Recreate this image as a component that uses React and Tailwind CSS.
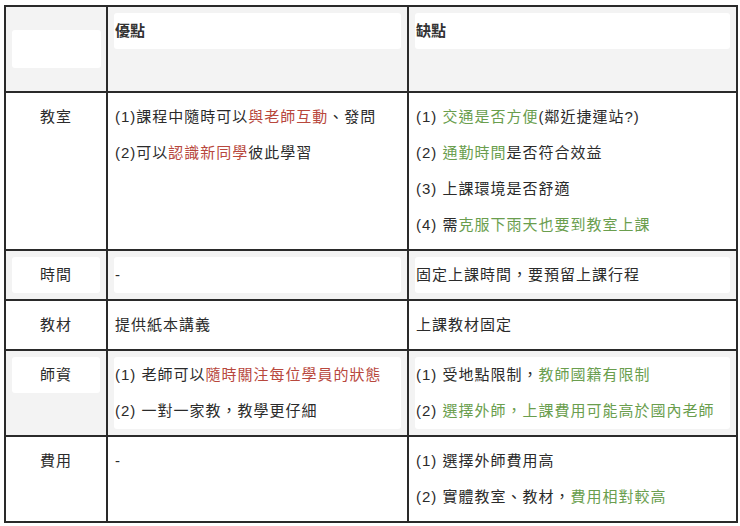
import React from "react";

const R = ({ children }) => <span className="text-[#b8483d]">{children}</span>;
const G = ({ children }) => <span className="text-[#6a9e4e]">{children}</span>;

function Lines({ lines }) {
  return (
    <div className="flex flex-col gap-[12px]">
      {lines.map((l, i) => (
        <p key={i} className="leading-[24px] whitespace-nowrap">{l}</p>
      ))}
    </div>
  );
}

function Cell({ gray, boxed, children, center }) {
  return (
    <div className={`p-[6px] ${gray ? "bg-[#f3f3f3]" : "bg-white"}`}>
      <div className={`${boxed ? "bg-white rounded-[3px]" : ""} py-[6px] ${center ? "text-center px-0" : "pl-[1px] pr-[4px]"}`}>
        {children}
      </div>
    </div>
  );
}

export default function App() {
  return (
    <div
      className="w-[740px] h-[526px] bg-white pt-[5px] pl-[4px] text-[15px] tracking-[1px] text-[#2b2b2b]"
      style={{ fontFamily: '"Liberation Sans", "Noto Sans CJK TC", sans-serif' }}
    >
      <div className="grid grid-cols-[100px_299px_327px] grid-rows-[84px_156px_48px_48px_84px_84px] gap-[2px] p-[2px] bg-[#2a2a2a] w-[734px]">
        {/* header */}
        <div className="bg-[#f3f3f3] flex items-center pl-[6px] pr-[5px]">
          <div className="bg-white h-[38px] w-full rounded-[3px]" />
        </div>
        <Cell gray boxed>
          <p className="leading-[24px] font-bold tracking-normal text-[#333]">優點</p>
        </Cell>
        <Cell gray boxed>
          <p className="leading-[24px] font-bold tracking-normal text-[#333]">缺點</p>
        </Cell>

        {/* 教室 */}
        <Cell center><Lines lines={["教室"]} /></Cell>
        <Cell>
          <Lines
            lines={[
              <>(1)課程中隨時可以<R>與老師互動</R>、發問</>,
              <>(2)可以<R>認識新同學</R>彼此學習</>,
            ]}
          />
        </Cell>
        <Cell>
          <Lines
            lines={[
              <>(1) <G>交通是否方便</G>(鄰近捷運站?)</>,
              <>(2) <G>通勤時間</G>是否符合效益</>,
              <>(3) 上課環境是否舒適</>,
              <>(4) 需<G>克服下雨天也要到教室上課</G></>,
            ]}
          />
        </Cell>

        {/* 時間 */}
        <Cell gray boxed center><Lines lines={["時間"]} /></Cell>
        <Cell gray boxed><Lines lines={["-"]} /></Cell>
        <Cell gray boxed><Lines lines={["固定上課時間，要預留上課行程"]} /></Cell>

        {/* 教材 */}
        <Cell center><Lines lines={["教材"]} /></Cell>
        <Cell><Lines lines={["提供紙本講義"]} /></Cell>
        <Cell><Lines lines={["上課教材固定"]} /></Cell>

        {/* 師資 */}
        <div className="bg-[#f3f3f3] p-[6px]">
          <div className="bg-white rounded-[3px] py-[6px] text-center">
            <p className="leading-[24px]">師資</p>
          </div>
        </div>
        <Cell gray boxed>
          <Lines
            lines={[
              <>(1) 老師可以<R>隨時關注每位學員的狀態</R></>,
              <>(2) 一對一家教，教學更仔細</>,
            ]}
          />
        </Cell>
        <Cell gray boxed>
          <Lines
            lines={[
              <>(1) 受地點限制，<G>教師國籍有限制</G></>,
              <>(2) <G>選擇外師，上課費用可能高於國內老師</G></>,
            ]}
          />
        </Cell>

        {/* 費用 */}
        <Cell center><Lines lines={["費用"]} /></Cell>
        <Cell><Lines lines={["-"]} /></Cell>
        <Cell>
          <Lines
            lines={[
              <>(1) 選擇外師費用高</>,
              <>(2) 實體教室、教材，<G>費用相對較高</G></>,
            ]}
          />
        </Cell>
      </div>
    </div>
  );
}
